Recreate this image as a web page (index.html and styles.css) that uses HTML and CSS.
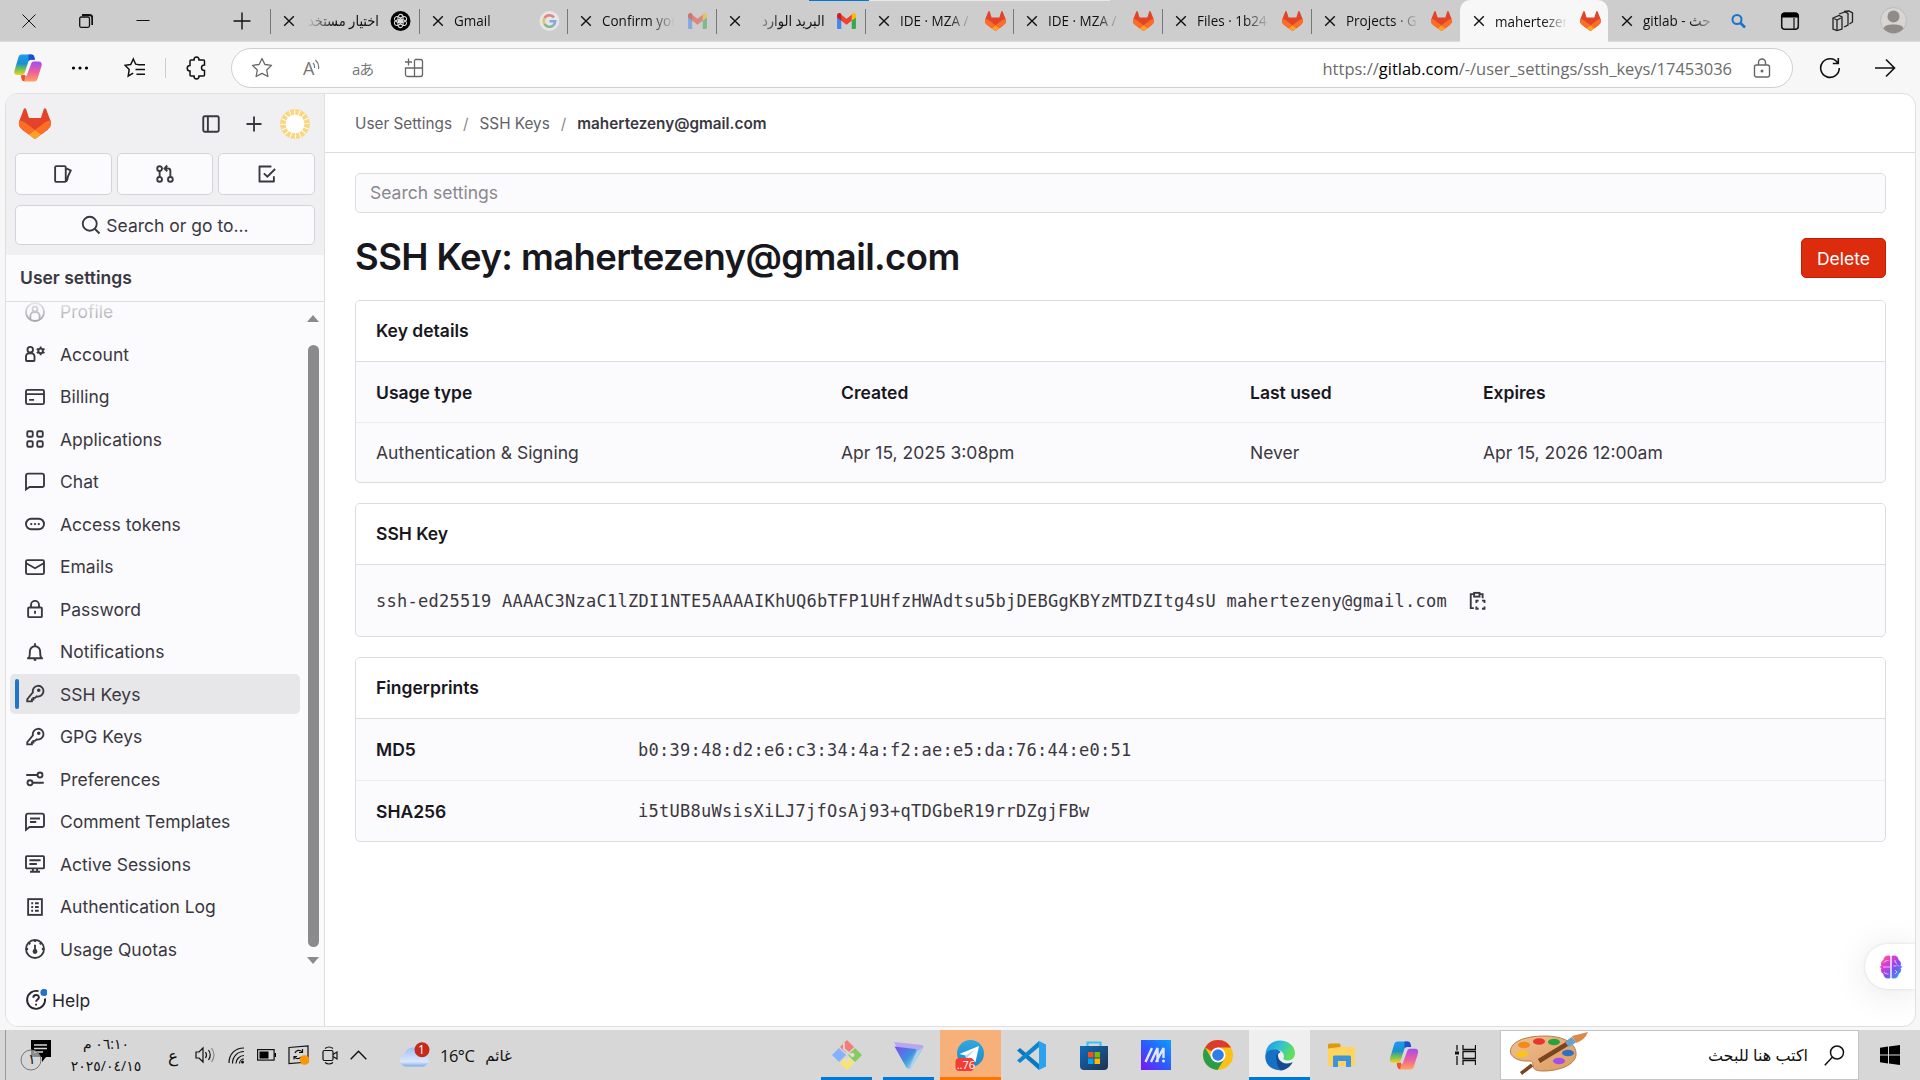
FILE: index.html
```html
<!DOCTYPE html>
<html lang="en">
<head>
<meta charset="utf-8">
<title>SSH Key: mahertezeny@gmail.com</title>
<link rel="stylesheet" href="styles.css">
</head>
<body>
<svg class="defs" width="0" height="0">
  <defs>
    <linearGradient id="cpA" x1="0" y1="0" x2="0" y2="1"><stop offset="0" stop-color="#1a9bf0"/><stop offset=".45" stop-color="#1c8fd0"/><stop offset=".7" stop-color="#6cbf5a"/><stop offset="1" stop-color="#f5d21c"/></linearGradient>
    <linearGradient id="cpB" x1="0" y1="0" x2="0" y2="1"><stop offset="0" stop-color="#a44df0"/><stop offset=".55" stop-color="#f0619a"/><stop offset="1" stop-color="#ffa45c"/></linearGradient>
    <linearGradient id="vpn" x1="0" y1="0" x2="1" y2="1"><stop offset="0" stop-color="#7a4cf5"/><stop offset=".55" stop-color="#3f8fe0"/><stop offset="1" stop-color="#7af5e0"/></linearGradient>
    <linearGradient id="ma" x1="0" y1="1" x2="1" y2="0"><stop offset="0" stop-color="#7a14f5"/><stop offset=".5" stop-color="#2b5cff"/><stop offset="1" stop-color="#0aa0ff"/></linearGradient>
    <linearGradient id="store" x1="0" y1="0" x2="1" y2="1"><stop offset="0" stop-color="#0f6cbd"/><stop offset="1" stop-color="#20314f"/></linearGradient>
    <linearGradient id="edgeA" x1="0" y1="0" x2="1" y2=".4"><stop offset="0" stop-color="#1b8fe0"/><stop offset=".5" stop-color="#2fc0d8"/><stop offset="1" stop-color="#62e05a"/></linearGradient>
    <linearGradient id="tg" x1="0" y1="0" x2="0" y2="1"><stop offset="0" stop-color="#2fa8e0"/><stop offset="1" stop-color="#1c8bc8"/></linearGradient>
    <linearGradient id="brain" x1="0" y1="0" x2="1" y2="1"><stop offset="0" stop-color="#ff8a2a"/><stop offset=".3" stop-color="#e83ad0"/><stop offset=".6" stop-color="#7a50f5"/><stop offset="1" stop-color="#22b5ff"/></linearGradient>
    <linearGradient id="cloud" x1="0" y1="0" x2="0" y2="1"><stop offset="0" stop-color="#9ec0f5"/><stop offset=".75" stop-color="#dce9fb"/><stop offset="1" stop-color="#7fa8ee"/></linearGradient>
    <linearGradient id="wood" x1="0" y1="0" x2="1" y2="1"><stop offset="0" stop-color="#efc193"/><stop offset="1" stop-color="#dc9a60"/></linearGradient>
  </defs>
  <symbol id="tanuki" viewBox="0 0 25 24">
    <path fill="#E24329" d="m24.507 9.5-.034-.09L21.082.562a.896.896 0 0 0-1.694.091l-2.29 7.01H7.825L5.535.653a.898.898 0 0 0-1.694-.09L.451 9.411.416 9.5a6.297 6.297 0 0 0 2.09 7.278l.012.01.03.022 5.16 3.867 2.56 1.935 1.554 1.176a1.051 1.051 0 0 0 1.268 0l1.555-1.176 2.56-1.935 5.197-3.89.014-.01A6.297 6.297 0 0 0 24.507 9.5Z"/>
    <path fill="#FC6D26" d="m24.507 9.5-.034-.09a11.44 11.44 0 0 0-4.56 2.051l-7.447 5.632 4.742 3.584 5.197-3.89.014-.01A6.297 6.297 0 0 0 24.507 9.5Z"/>
    <path fill="#FCA326" d="m7.707 20.677 2.56 1.935 1.555 1.176a1.051 1.051 0 0 0 1.268 0l1.555-1.176 2.56-1.935-4.743-3.584-4.755 3.584Z"/>
    <path fill="#FC6D26" d="M5.01 11.461a11.43 11.43 0 0 0-4.56-2.05L.416 9.5a6.297 6.297 0 0 0 2.09 7.278l.012.01.03.022 5.16 3.867 4.745-3.584-7.444-5.632Z"/>
  </symbol>
  <symbol id="x" viewBox="0 0 12 12"><path d="M1.2 1.2l9.6 9.6M10.8 1.2L1.2 10.8" fill="none" stroke="#111" stroke-width="1.4"/></symbol>
  <symbol id="gmail" viewBox="0 0 20 16">
    <path fill="#4285f4" d="M1 3.5v11A1.2 1.2 0 0 0 2.2 15.7H5V7z"/><path fill="#34a853" d="M15 7v8.700h2.800A1.200 1.200 0 0 0 19 14.500V3.500z"/>
    <path fill="#ea4335" d="M4.500 1.600L10 5.800l5.500-4.200v5.800L10 11.500 4.500 7.400z"/><path fill="#c5221f" d="M1 2.500C1 .6 3.200-.2 4.500.8L5 1.200v6.500L1 4.700z"/><path fill="#fbbc04" d="M19 2.500C19 .6 16.800-.2 15.500.8l-.5.4v6.500l4-3z"/>
  </symbol>
  <symbol id="copilot" viewBox="0 0 28 30">
    <path fill="url(#cpA)" d="M8 1.500h9.500c1.500 0 2.300.8 2.700 2.200l.8 3h-4c-1.500 0-2.300.7-2.700 2L11 19c-.5 1.800-1.500 3-3.500 3H3.200C.8 22-.2 20 .5 17.500L4.500 4c.6-1.700 1.500-2.500 3.500-2.500z"/>
    <path fill="url(#cpB)" d="M20 8.500h4.800c2.400 0 3.400 2 2.700 4.500L23.500 26c-.6 1.700-1.500 2.500-3.500 2.500h-9.500c-1.500 0-2.300-.8-2.700-2.200L7 23.500h3.500c1.500 0 2.300-.7 2.700-2L17 11c.5-1.700 1.300-2.500 3-2.500z"/>
    <path fill="#1d4fd0" d="M14.500 1.500h3c1.500 0 2.300.8 2.700 2.200l.8 3h-4c-1.200 0-2 .6-2.500 1.500z"/>
    <path fill="#f0522c" d="M7.500 22h3.800l-1 6.300c-1.300 0-2.100-.8-2.500-2.200L7 23z"/>
  </symbol>
  <symbol id="i-key" viewBox="0 0 16 16"><path d="M6.300 6.700a4.300 4.300 0 1 1 3.100 3.200L8 11.100H6.700v1.300H5.500v1.500H1.800v-1.700z"/><circle cx="11" cy="5" r=".7" fill="currentColor"/></symbol>
</svg>

<header class="tabbar">
  <div class="loadline"><i></i></div>
  <div class="win">
    <span><svg width="14" height="14" viewBox="0 0 14 14"><path d="M.5.5l13 13M13.500.5l-13 13" stroke="#111" fill="none"/></svg></span>
    <span><svg width="14" height="14" viewBox="0 0 14 14" fill="none" stroke="#111" stroke-width="1.300"><rect x=".7" y="3" width="9.800" height="10.300" rx="1.500"/><path d="M3 1h7.500a2.800 2.800 0 0 1 2.800 2.800V11" stroke-width="2"/></svg></span>
    <span><svg width="14" height="14" viewBox="0 0 14 14"><path d="M.5 6.500h13" stroke="#111"/></svg></span>
  </div>
  <span class="newtab"><svg width="18" height="18" viewBox="0 0 18 18"><path d="M.5 9h17M9 .5v17" stroke="#111" stroke-width="1.400"/></svg></span>
  <div class="tabs">
    <div class="tab"><svg class="tx"><use href="#x"/></svg><span class="tt ar"><b>اختيار مستخدم</b></span>
      <svg class="fav" viewBox="0 0 20 20"><circle cx="10" cy="10" r="10"/><g fill="none" stroke="#ddd" stroke-width="1.100"><ellipse cx="10" cy="7" rx="2.600" ry="3.600"/><ellipse cx="10" cy="7" rx="2.600" ry="3.600" transform="rotate(60 10 10)"/><ellipse cx="10" cy="7" rx="2.600" ry="3.600" transform="rotate(120 10 10)"/><ellipse cx="10" cy="7" rx="2.600" ry="3.600" transform="rotate(180 10 10)"/><ellipse cx="10" cy="7" rx="2.600" ry="3.600" transform="rotate(240 10 10)"/><ellipse cx="10" cy="7" rx="2.600" ry="3.600" transform="rotate(300 10 10)"/></g></svg></div>
    <div class="tab"><svg class="tx"><use href="#x"/></svg><span class="tt"><b>Gmail</b></span>
      <svg class="fav dim" viewBox="0 0 20 20"><circle cx="10" cy="10" r="10" fill="#fff"/><g fill="none" stroke-width="2.600"><path d="M14.500 6.300A5.800 5.800 0 0 0 5 7.100" stroke="#ea4335"/><path d="M5 7.100a5.800 5.800 0 0 0 0 5.800" stroke="#fbbc04"/><path d="M5 12.900a5.800 5.800 0 0 0 8.700 1.500" stroke="#34a853"/><path d="M13.700 14.400a5.600 5.600 0 0 0 2-4.200H10" stroke="#4285f4"/></g></svg></div>
    <div class="tab"><svg class="tx"><use href="#x"/></svg><span class="tt"><b>Confirm you</b></span><svg class="fav dim"><use href="#gmail"/></svg></div>
    <div class="tab"><svg class="tx"><use href="#x"/></svg><span class="tt ar"><b>البريد الوارد</b></span><svg class="fav"><use href="#gmail"/></svg></div>
    <div class="tab"><svg class="tx"><use href="#x"/></svg><span class="tt"><b>IDE · MZA / m</b></span><svg class="fav"><use href="#tanuki"/></svg></div>
    <div class="tab"><svg class="tx"><use href="#x"/></svg><span class="tt"><b>IDE · MZA / m</b></span><svg class="fav"><use href="#tanuki"/></svg></div>
    <div class="tab"><svg class="tx"><use href="#x"/></svg><span class="tt"><b>Files · 1b24</b></span><svg class="fav"><use href="#tanuki"/></svg></div>
    <div class="tab"><svg class="tx"><use href="#x"/></svg><span class="tt"><b>Projects · Gi</b></span><svg class="fav"><use href="#tanuki"/></svg></div>
    <div class="tab active"><svg class="tx"><use href="#x"/></svg><span class="tt"><b>mahertezeny</b></span><svg class="fav"><use href="#tanuki"/></svg></div>
    <div class="tab plain"><svg class="tx"><use href="#x"/></svg><span class="tt"><b>gitlab - حث</b></span>
      <svg class="fav" viewBox="0 0 20 20" fill="none" stroke="#1a73c8" stroke-width="2"><circle cx="8.500" cy="8.500" r="4.500"/><path d="M12 12l4.500 4.500" stroke-width="2.600"/></svg></div>
  </div>
  <div class="tabtools">
    <svg width="20" height="20" viewBox="0 0 20 20"><rect x="1.700" y="2.200" width="16.600" height="16" rx="3" fill="none" stroke="#111" stroke-width="1.500"/><path d="M1.500 6.500V4.500a3 3 0 0 1 3-3h11a3 3 0 0 1 3 3v2z"/><path d="M14 7v11" stroke="#111" stroke-width="1.200"/></svg>
    <svg width="24" height="22" viewBox="0 0 24 22" fill="none" stroke="#222" stroke-width="1.300"><path d="M2 8l6-2.500 3 1.500v12l-5 1.500-4-1.500zM6 10l4-2M6 10v10M2 8l4 2"/><path d="M8 4l6-2 3 1.500V15l-4 2M13 1.500l5-.5 3.500 2V12l-3 2"/></svg>
    <svg width="27" height="27" viewBox="0 0 27 27"><circle cx="13.500" cy="13.500" r="13" fill="#d8d5d2" stroke="#bdbab7"/><circle cx="13.500" cy="9.500" r="6" fill="#8f8b88"/><path d="M3.500 21.500c1-3 4-4 10-4s9 1 10 4a13 13 0 0 1-20 0z" fill="#8f8b88"/></svg>
  </div>
</header>

<div class="toolbar">
  <div class="tools">
    <svg width="28" height="30"><use href="#copilot"/></svg>
    <svg width="18" height="6" viewBox="0 0 18 6"><circle cx="2.500" cy="3" r="1.600"/><circle cx="9" cy="3" r="1.600"/><circle cx="15.500" cy="3" r="1.600"/></svg>
    <svg width="22" height="22" viewBox="0 0 22 22" fill="none" stroke="#111" stroke-width="1.500"><path d="M14 7.600l-2.300-.4L9.300 2 6.700 7.500l-5.700.8 4.200 4.100L4.200 19l5-2.800"/><path d="M14 7.700h7M11.500 12.500H21M12.500 17.300H21" stroke-width="1.600"/></svg>
    <i class="sep"></i>
    <svg width="22" height="24" viewBox="0 0 22 24" fill="none" stroke="#111" stroke-width="1.500"><path d="M5 4h3c0-4 5-4 5 0h4.500a1 1 0 0 1 1 1v4c-4 0-4 5.500 0 5.500V19a1 1 0 0 1-1 1H13c0 4-5 4-5 0H5a1 1 0 0 1-1-1v-4c-3.700 0-3.700-5.500 0-5.500V5a1 1 0 0 1 1-1z"/></svg>
  </div>
  <div class="address">
    <svg width="22" height="22" viewBox="0 0 22 22" fill="none" stroke="#666" stroke-width="1.300"><path d="M11 1.500l2.900 6 6.600.9-4.800 4.600 1.200 6.500L11 16.400l-5.900 3.100L6.300 13 1.500 8.400l6.600-.9z" stroke-linejoin="round"/></svg>
    <span class="aloud">A<svg width="8" height="11" viewBox="0 0 8 11" fill="none" stroke="#777" stroke-width="1.200"><path d="M1 4q2 2 1.500 5M3.500 1q4 4 3 9"/></svg></span>
    <span class="trans">aあ</span>
    <svg width="20" height="20" viewBox="0 0 20 20" fill="none" stroke="#666" stroke-width="1.300"><path d="M11 1.500h5.500a2 2 0 0 1 2 2v13a2 2 0 0 1-2 2h-13a2 2 0 0 1-2-2V10h17M10.500 1.500v17M4.500.5v7M1 4h7"/></svg>
    <div class="url">https://<em>gitlab.com</em>/-/user_settings/ssh_keys/17453036</div>
    <svg width="18" height="20" viewBox="0 0 18 20" fill="none" stroke="#666" stroke-width="1.400"><rect x="1.500" y="7" width="15" height="12" rx="2"/><path d="M5.500 7V4.500a3.500 3.500 0 0 1 7 0V7"/><circle cx="9" cy="13" r=".8" fill="#666"/></svg>
  </div>
  <div class="nav2">
    <svg width="22" height="22" viewBox="0 0 22 22" fill="none" stroke="#111" stroke-width="1.600"><path d="M18.800 6A9.300 9.300 0 1 0 20.300 11M19.300 1v5.500h-5.500"/></svg>
    <svg width="22" height="20" viewBox="0 0 22 20" fill="none" stroke="#111" stroke-width="1.600"><path d="M1 10h19M12 1.500l8.500 8.500-8.500 8.500"/></svg>
  </div>
</div>

<div class="page">
  <aside class="side">
    <div class="sidetop">
      <div class="brand">
        <svg width="32" height="31"><use href="#tanuki"/></svg>
        <svg class="ic push" viewBox="0 0 16 16"><rect x="1.800" y="1.800" width="12.400" height="12.400" rx="1.200"/><path d="M5.500 2v12"/></svg>
        <svg class="ic" viewBox="0 0 16 16"><path d="M8 2v12M2 8h12"/></svg>
        <svg class="ava" width="30" height="30" viewBox="0 0 30 30"><circle cx="15" cy="15" r="14.500" fill="#fff" stroke="#f2e2c0"/><circle cx="15" cy="15" r="12" fill="none" stroke="#f9d77e" stroke-width="5.500" stroke-dasharray="3.700 1"/><rect x="7.500" y="7.500" width="15" height="15" rx="2" fill="#fff"/></svg>
      </div>
      <div class="trio">
        <span><svg class="ic" viewBox="0 0 16 16"><rect x="1.700" y="1.700" width="8.500" height="12.600" rx="1"/><path d="M10.500 3.500l3.700 1.700-3.700 8"/><path d="M10.200 13.800c1 0 1.500-2 1.500-3"/></svg></span>
        <span><svg class="ic" viewBox="0 0 16 16"><circle cx="3.700" cy="3.700" r="1.900"/><circle cx="3.700" cy="12.300" r="1.900"/><circle cx="12.300" cy="12.300" r="1.900"/><path d="M3.700 5.600v4.800M12.300 10.400V5.500a2 2 0 0 0-2-2H8M9.800 1.200L7.600 3.500l2.200 2.300"/></svg></span>
        <span><svg class="ic" viewBox="0 0 16 16"><path d="M13.500 9.800V14H2V2h9.500" stroke-linejoin="round"/><path d="M5.500 7.500L8.300 10.200 14.500 4"/></svg></span>
      </div>
      <div class="sgo"><svg class="ic" viewBox="0 0 16 16"><circle cx="7" cy="7" r="5.600"/><path d="M11 11l3.800 3.800"/></svg>Search or go to...</div>
    </div>
    <h2>User settings</h2>
    <div class="navwrap">
      <nav>
        <a><svg class="ic" viewBox="0 0 16 16"><circle cx="8" cy="8" r="7.200"/><circle cx="8" cy="5.600" r="2"/><path d="M4.300 13.500V11a3 3 0 0 1 3-3h1.400a3 3 0 0 1 3 3v2.500"/></svg>Profile</a>
        <a><svg class="ic" viewBox="0 0 16 16"><circle cx="4.200" cy="4.500" r="2.200"/><path d="M.8 13V10a2.600 2.600 0 0 1 2.600-2.600H5A2.600 2.600 0 0 1 7.600 10v3q0 .6-.6.600H1.400q-.6 0-.6-.6z"/><circle cx="12.500" cy="5.500" r="1.800"/><path d="M12.500 2v1.400M12.500 7.600V9M9.400 3.800l1.300.7M14.300 6.500l1.300.7M9.400 7.200l1.300-.7M14.300 4.500l1.300-.7"/></svg>Account</a>
        <a><svg class="ic" viewBox="0 0 16 16"><rect x=".8" y="2.300" width="14.400" height="11.400" rx="1.200"/><path d="M1 5.700h14M3.300 10.300h4"/></svg>Billing</a>
        <a><svg class="ic" viewBox="0 0 16 16"><rect x="1.800" y="1.800" width="4.400" height="4.400" rx="1"/><rect x="9.800" y="1.800" width="4.400" height="4.400" rx="1"/><rect x="1.800" y="9.800" width="4.400" height="4.400" rx="1"/><rect x="9.800" y="9.800" width="4.400" height="4.400" rx="1"/></svg>Applications</a>
        <a><svg class="ic" viewBox="0 0 16 16"><path d="M.8 14V3q0-1.700 1.700-1.700h11q1.700 0 1.700 1.700v7.300q0 1.700-1.700 1.700H3.600z"/></svg>Chat</a>
        <a><svg class="ic" viewBox="0 0 16 16"><rect x=".8" y="3.800" width="14.400" height="8.400" rx="4.200"/><g class="dot"><circle cx="5" cy="8" r=".9"/><circle cx="8" cy="8" r=".9"/><circle cx="11" cy="8" r=".9"/></g></svg>Access tokens</a>
        <a><svg class="ic" viewBox="0 0 16 16"><rect x=".8" y="2.500" width="14.400" height="11.200" rx="1.200"/><path d="M1 5l7 4 7-4"/></svg>Emails</a>
        <a><svg class="ic" viewBox="0 0 16 16"><rect x="2.500" y="6.800" width="11" height="7.700" rx=".8"/><path d="M4.800 6.500V4.700a3.200 3.200 0 0 1 6.400 0v1.800M8 9.300v2.500"/></svg>Password</a>
        <a><svg class="ic" viewBox="0 0 16 16"><path d="M1.700 13h12.600M3 13c1-1.500.9-3 .9-5.500a4.100 4.100 0 0 1 8.200 0c0 2.500 0 4 .9 5.500M8 1v2"/><path d="M7 14.300h2"/></svg>Notifications</a>
        <a class="on"><svg class="ic"><use href="#i-key"/></svg>SSH Keys</a>
        <a><svg class="ic"><use href="#i-key"/></svg>GPG Keys</a>
        <a><svg class="ic" viewBox="0 0 16 16"><circle cx="12" cy="4.800" r="2"/><circle cx="4" cy="11" r="2"/><path d="M1 4.800h9M6 11h9"/></svg>Preferences</a>
        <a><svg class="ic" viewBox="0 0 16 16"><path d="M.8 14.300V3q0-1.700 1.700-1.700h11q1.700 0 1.700 1.700v7.300q0 1.700-1.700 1.700H3.600zM4 5.200h8M4 8h5"/></svg>Comment Templates</a>
        <a><svg class="ic" viewBox="0 0 16 16"><rect x=".8" y="1.700" width="14.400" height="9.800" rx=".6"/><path d="M3.500 5h9M3.500 8h6M4 14.200h8M6.300 12v2M9.700 12v2"/></svg>Active Sessions</a>
        <a><svg class="ic" viewBox="0 0 16 16"><rect x="2.500" y="1.700" width="11" height="12.600"/><path d="M5 5h1.500M8 5h3M5 8h1.500M8 8h3M5 11h1.500M8 11h3"/></svg>Authentication Log</a>
        <a><svg class="ic" viewBox="0 0 16 16"><circle cx="8" cy="8" r="7.200"/><path d="M8 4.500v6M8 1v1.300M1 8h1.500M13.500 8H15M3.200 3.200l1 1M12.800 3.200l-1 1"/><circle cx="8" cy="10" r="1.200" fill="currentColor"/></svg>Usage Quotas</a>
      </nav>
      <div class="sb"><i class="up"></i><i class="thumb"></i><i class="down"></i></div>
    </div>
    <div class="help"><svg width="22" height="22" viewBox="0 0 22 22" fill="none" stroke="#28272d" stroke-width="1.900"><path d="M13.500 2.200A9 9 0 1 0 20 9.500"/><path d="M8.300 8.700c0-3.700 5.600-3.500 5.600-.3 0 2-2.800 2-2.800 4.300M11.100 14.800v1.800"/><circle cx="19" cy="3.500" r="3.600" fill="#1f75cb" stroke="none"/></svg>Help</div>
  </aside>
  <main>
    <div class="crumbs"><span>User Settings</span><i>/</i><span>SSH Keys</span><i>/</i><b>mahertezeny@gmail.com</b></div>
    <div class="content">
      <div class="ssearch">Search settings</div>
      <div class="head"><h1>SSH Key: mahertezeny@gmail.com</h1><button class="del">Delete</button></div>
      <section class="card">
        <h3>Key details</h3>
        <div class="row g4 th"><span>Usage type</span><span>Created</span><span>Last used</span><span>Expires</span></div>
        <div class="row g4"><span>Authentication &amp; Signing</span><span>Apr 15, 2025 3:08pm</span><span>Never</span><span>Apr 15, 2026 12:00am</span></div>
      </section>
      <section class="card">
        <h3>SSH Key</h3>
        <div class="row keyrow"><code>ssh-ed25519 AAAAC3NzaC1lZDI1NTE5AAAAIKhUQ6bTFP1UHfzHWAdtsu5bjDEBGgKBYzMTDZItg4sU mahertezeny@gmail.com</code>
          <svg class="ic" viewBox="0 0 16 16"><path d="M5.500 2.500H3v11.200h2.500M10 2.500h2.500v3.200"/><rect x="5.700" y="1.500" width="4.300" height="3"/><path d="M7.500 9.500V7.700h1.800M12 7.700h2v1.800M14 12.300V14.200h-2M9.300 14.200H7.500v-1.900"/></svg></div>
      </section>
      <section class="card">
        <h3>Fingerprints</h3>
        <div class="row g2"><strong>MD5</strong><code>b0:39:48:d2:e6:c3:34:4a:f2:ae:e5:da:76:44:e0:51</code></div>
        <div class="row g2"><strong>SHA256</strong><code>i5tUB8uWsisXiLJ7jfOsAj93+qTDGbeR19rrDZgjFBw</code></div>
      </section>
    </div>
    <div class="float"><svg width="24" height="26" viewBox="0 0 24 26"><path fill="url(#brain)" d="M11.300 2v22C8 25.500 4.500 23.500 4.300 20 1.800 18.500 1.300 15.500 2.500 14L.3 13l2.200-1.200C1.300 9.500 2.500 7 4.300 6 4.500 2.500 8 .5 11.300 2zM12.700 2v22c3.300 1.500 6.800-.5 7-4 2.500-1.500 3-4.500 1.800-6l2.200-1-2.200-1.200c1.200-2.300 0-4.800-1.800-5.800-.2-3.500-3.700-5.500-7-4z"/><path d="M4 13h7M5 8.500c1-2 3-2 4.500-2M5 18c1 2 3 2 4.500 2M16 6v2l2 1.500M14.500 12h3M18 10.500l2 2M16 16l2 2-2 2" stroke="#fff" stroke-opacity=".65" fill="none"/></svg></div>
  </main>
</div>

<footer class="task">
  <div class="tray">
    <span class="note"><svg width="32" height="32" viewBox="0 0 32 32"><path d="M11 1h20v17h-5l-4 5v-5H11z"/><path d="M14 6h13M14 9.500h13M14 13h9" stroke="#d6d6d6" stroke-width="1.300"/><circle cx="11" cy="21" r="10" fill="#d6d6d6" fill-opacity=".65" stroke="#777"/></svg><b>١</b></span>
    <span class="clock"><b>٠٦:١٠ م</b><b>٢٠٢٥/٠٤/١٥</b></span>
    <span class="lang">ع</span>
    <svg width="21" height="18" viewBox="0 0 21 18" fill="none" stroke="#111" stroke-width="1.200"><path d="M1 6h3l4-4v14l-4-4H1zM10.500 6q2 3 0 6M13.500 4q3.500 5 0 10"/><path d="M16.500 2q5 7 0 14" stroke="#888"/></svg>
    <svg width="17" height="17" viewBox="0 0 17 17" fill="none" stroke="#111" stroke-width="1.200"><path d="M1 16C1 7 7 1 16 1M4.500 16.500C4.500 9.500 9.500 4.500 16 4.500M8 16.500c0-4 3.500-8 8-8M11.500 16.500c0-2.500 2-4.500 4.500-4.500"/><circle cx="14.500" cy="15" r="1.500" fill="#111" stroke="none"/></svg>
    <svg width="19" height="12" viewBox="0 0 19 12"><rect x=".6" y=".6" width="16.500" height="10.500" fill="none" stroke="#111" stroke-width="1.200"/><path d="M2.500 2.500h9v7h-9zM17.500 4h1.500v4h-1.500z"/></svg>
    <svg width="22" height="20" viewBox="0 0 22 20" fill="none" stroke="#111" stroke-width="1.200"><path d="M1 2.500L20 1v16L1 18.500z"/><path d="M7 8c1-3 5-3.500 7-1M14.500 4v3.500H11M13 12c-2 2.500-5 2-6.500 0M6 14.500V11.500h3"/><circle cx="16.500" cy="15" r="4.800" fill="#ff9500" stroke="none"/></svg>
    <svg width="16" height="19" viewBox="0 0 16 19" fill="none" stroke="#111" stroke-width="1.200"><path d="M3 2.500q4-3 8 0M3 16.500q4 3 8 0"/><rect x="1" y="4.500" width="10" height="10" rx="1.500"/><path d="M11 8.500l4-2.500v7l-4-2.500"/></svg>
    <svg width="17" height="10" viewBox="0 0 17 10" fill="none" stroke="#111" stroke-width="1.400"><path d="M.7 9.300L8.500 1.200l7.800 8.100"/></svg>
    <span class="wx"><svg width="31" height="26" viewBox="0 0 31 26"><path fill="url(#cloud)" d="M7 24.500a6.500 6.500 0 0 1-1.500-12.800A9.500 9.500 0 0 1 23 11a6.800 6.800 0 0 1 1 13.500z"/><circle cx="23" cy="7.700" r="7.500" fill="#c42b1c"/></svg><i>1</i></span>
    <span class="temp">16°C</span><span class="cond">غائم</span>
  </div>
  <div class="apps">
    <span class="app run"><svg width="30" height="32" viewBox="0 0 30 32"><path fill="#f47c7c" d="M15 1l7 7-7 7-7-7z"/><path fill="#84b2ff" d="M7 9l7 7-7 7-7-7z"/><path fill="#87cb5c" d="M23 9l7 7-7 7-7-7z"/><path fill="#fbe373" d="M15 17l7 7-7 7-7-7z"/><path d="M12 4v6l7 6M15 12v9" stroke="#d9d4d0" stroke-width="2" fill="none"/><circle cx="15" cy="21.500" r="2" fill="#e5dfc8"/><circle cx="20.500" cy="16" r="2" fill="#e0e6d6"/></svg></span>
    <span class="app run"><svg width="31" height="31" viewBox="0 0 31 31"><path fill="#b9a6f0" d="M1 2l28 3q2 .5 1 3L18 28q-1.500 2.500-3 0z"/><path fill="#8ee8e0" d="M29.500 7.500L18 28q-1 1.500-2 1l8-17z"/><path fill="url(#vpn)" d="M1.500 6.500L22 9q2 .5 1 2.500L15 28q-1 1-2-1z"/></svg></span>
    <span class="app tg"><svg width="30" height="32" viewBox="0 0 30 32"><circle cx="15.500" cy="14.500" r="13.500" fill="url(#tg)"/><path fill="#fff" d="M4.500 15L24 7l-3.500 16-6-4.500-3 3-1-5z"/><path d="M10.500 16.500L20 10.500l-7 7.500-1.500 3.500z" fill="#bcd8e8"/><rect x=".5" y="19" width="18.500" height="13" rx="4" fill="#f23c34"/></svg><i>..76</i></span>
    <span class="app"><svg width="30" height="31" viewBox="0 0 30 31"><path fill="#0a78be" d="M0 10.500l3-2.500L22 24v6z"/><path fill="#0f85cc" d="M0 20.500L3 23 22 7V1z"/><path fill="#29a3ee" d="M22 1l7 3.500v22L22 30z"/></svg></span>
    <span class="app"><svg width="30" height="31" viewBox="0 0 30 31"><path d="M8.500 8V2.500h13V8" fill="none" stroke="#39c3f0" stroke-width="2.200"/><path fill="url(#store)" d="M1 6h28v20q0 4-4 4H5q-4 0-4-4z"/><path fill="#f25022" d="M9 12h5.500v5.500H9z"/><path fill="#7fba00" d="M15.500 12H21v5.500h-5.500z"/><path fill="#00a4ef" d="M9 18.500h5.500V24H9z"/><path fill="#ffb900" d="M15.500 18.500H21V24h-5.500z"/></svg></span>
    <span class="app"><svg width="30" height="30" viewBox="0 0 30 30"><path fill="url(#ma)" d="M0 0h30v30H0z"/><path d="M4.500 22L11 8M10 22l6.500-14v14M15 22L22.500 8v10" stroke="#e4e8ff" stroke-width="2.400" fill="none"/><circle cx="22.500" cy="21" r="1.500" fill="#e4e8ff"/></svg></span>
    <span class="app"><svg width="30" height="30" viewBox="0 0 30 30"><circle cx="15" cy="15" r="15" fill="#fbc116"/><path fill="#dc3a2d" d="M15 15L2 7.500A15 15 0 0 1 28 7.500H15z"/><path fill="#2a9d4b" d="M2 7.500A15 15 0 0 0 14.500 30L21.500 18.700 15 15 8.600 18.700z"/><circle cx="15" cy="15" r="7.500" fill="#fff"/><circle cx="15" cy="15" r="5.800" fill="#2f7de8"/></svg></span>
    <span class="app cur"><svg width="30" height="31" viewBox="0 0 30 31"><path fill="url(#edgeA)" d="M.5 14C1 6 7 .5 15 .5S30 6 30 13c0 5-3.500 7.500-7.500 7.500-3 0-4.500-1-4-2.500C20 14 17 10 11.500 10 6 10 1.500 12 .5 14z"/><path fill="#1670c4" d="M.3 16C.5 11 6 9 11 9.500c3 .3 4.500 2 4.500 3-5 1-6 11 1 17.800C7.500 31 0 25 .3 16z"/><path fill="#154b94" d="M11 18c0-2 .8-4 2.500-5.500-2 5 2 11 8.500 11 3 0 4.500-1 5.500-1.500 0 1-4 8-11.500 8.500C13 28 11 22.500 11 18z"/></svg></span>
    <span class="app"><svg width="27" height="25" viewBox="0 0 27 25"><path fill="#dc9a0c" d="M0 2q0-1.500 1.500-1.500H11q1.500 0 1.500 1.500v4H0z"/><path fill="#ffd35c" d="M0 5.500L12 4h15v18q0 1-1 1H1q-1 0-1-1z"/><path fill="#3b94dc" d="M5 24V14q0-1.500 1.500-1.500h15q1.500 0 1.500 1.500v10h-5v-6h-8v6z"/></svg></span>
    <span class="app"><svg width="30" height="31"><use href="#copilot"/></svg></span>
    <span class="app"><svg width="21" height="20" viewBox="0 0 21 20" fill="none" stroke="#111" stroke-width="1.300"><path d="M8 0v4.500h12.500V0M8 20v-4.500h12.500V20M8 6.500h12.500v7H8zM2 0v5.500M2 11v9"/><path d="M0 6.500h4v3H0z" fill="#111" stroke="none"/></svg></span>
  </div>
  <div class="tsearch">
    <svg width="80" height="46" viewBox="0 0 80 46"><path fill="url(#wood)" stroke="#b87a44" d="M21 29C8 30 1 24 1.500 19 2 10 15 4 36 4c18 0 32 7 31 19-1 10-17 16-33 16-9 0-10-3-10-6 0-2-1-4-3-4z"/><g><ellipse cx="15" cy="13" rx="6" ry="3.200" fill="#f28a1c"/><ellipse cx="30" cy="9.500" rx="6" ry="3.200" fill="#e8342c"/><ellipse cx="45" cy="10" rx="6" ry="3.200" fill="#27a33c"/><ellipse cx="13" cy="22" rx="6" ry="3.200" fill="#fcc419"/><ellipse cx="59" cy="21" rx="6" ry="3.200" fill="#2a72c8"/><ellipse cx="50" cy="29" rx="6" ry="3.200" fill="#a24df0"/></g><path d="M58 12L30 29" stroke="#7d4420" stroke-width="4.500"/><path d="M23 33L12 41.500" stroke="#7d4420" stroke-width="3.500"/><path d="M65 7.500l-7 5" stroke="#6ba3c8" stroke-width="7"/><path fill="#dd8848" d="M63 4L79 0q-3 8-12 11z"/></svg>
    <span class="ph">اكتب هنا للبحث</span>
    <svg width="21" height="21" viewBox="0 0 21 21" fill="none" stroke="#111" stroke-width="1.500"><circle cx="13" cy="7.500" r="6.500"/><path d="M8.500 12L.8 20.200"/></svg>
  </div>
  <span class="start"><svg width="20" height="20" viewBox="0 0 20 20"><path d="M0 2.700l8-1.100v8H0zM9 1.400L20 0v9.600H9zM0 10.500h8v8l-8-1.200zM9 10.500h11V20L9 18.500z"/></svg></span>
</footer>
</body>
</html>
```

FILE: styles.css
```css
* { box-sizing: border-box; }
body { margin: 0; width: 1920px; height: 1080px; overflow: hidden; display: flex; flex-direction: column; background: #f7f7f7; font-family: Inter, "Noto Sans", sans-serif; font-size: 17.5px; color: #3a383f; }
svg { flex: none; display: block; }
.defs { position: absolute; }
b, i, em { font-weight: inherit; font-style: normal; }

/* tab strip */
.tabbar { position: relative; flex: none; height: 42px; background: #cdcdcd; display: flex; align-items: stretch; font-family: "Open Sans", "Noto Sans", "DejaVu Sans", sans-serif; font-size: 14.5px; color: #111; border-bottom: 1px solid #dcdcdc; }
.loadline { position: absolute; left: 809px; top: 0; width: 301px; height: 1px; background: #e8e8e8; }
.loadline i { display: block; width: 60px; height: 1px; background: #0078d4; }
.win { display: flex; width: 172px; }
.win span { flex: 1; display: flex; align-items: center; justify-content: center; }
.newtab { width: 98px; padding-left: 61px; display: flex; align-items: center; }
.tabs { display: flex; }
.tab { position: relative; width: 148.700px; display: flex; align-items: center; padding-left: 13px; }
.tab::before { content: ""; position: absolute; left: 0; top: 9px; height: 25px; width: 1px; background: #777; }
.tab.active { background: #f7f7f7; border-radius: 10px 10px 0 0; height: 42px; }
.tab.active::before, .tab.plain::before { display: none; }
.tab.plain { border-radius: 0 0 0 10px; }
.tx { width: 12px; height: 12px; }
.tt { width: 74px; margin-left: 10px; overflow: hidden; white-space: nowrap; -webkit-mask-image: linear-gradient(to right, #000 65%, transparent 98%); mask-image: linear-gradient(to right, #000 65%, transparent 98%); }
.tt b { display: inline-block; transform: scaleX(.93); transform-origin: left; }
.tt.ar { direction: rtl; -webkit-mask-image: linear-gradient(to left, #000 60%, transparent 98%); mask-image: linear-gradient(to left, #000 60%, transparent 98%); }
.tt.ar b { transform-origin: right; transform: scaleX(.9); }
.fav { width: 21px; height: 20px; margin-left: 11px; }
.dim { opacity: .5; }
.tabtools { margin-left: 23px; display: flex; align-items: center; gap: 31px; }
.tabtools svg:last-child { margin-left: -6px; }

/* address row */
.toolbar { flex: none; height: 51px; display: flex; align-items: center; padding-top: 1px; }
.tools { display: flex; align-items: center; width: 231px; padding-left: 14px; }
.tools svg:nth-child(2) { margin-left: 29px; }
.tools svg:nth-child(3) { margin-left: 35px; }
.sep { width: 1px; height: 20px; background: #ccc; margin: 0 20px 0 19px; }
.address { width: 1562px; height: 40px; border: 1px solid #cfcfcf; border-radius: 20px; background: #fff; display: flex; align-items: center; padding-left: 19px; color: #6b6b6b; font-family: "Open Sans", "Noto Sans", sans-serif; }
.aloud { display: flex; align-items: center; margin-left: 30px; font-size: 18px; width: 22px; color: #777; }
.aloud svg { margin: -8px 0 0 -2px; }
.trans { margin-left: 27px; width: 24px; font-size: 15px; letter-spacing: -1px; font-family: "Open Sans", "Noto Sans CJK JP", sans-serif; color: #777; }
.address > svg:nth-child(4) { margin-left: 28px; }
.url { margin-left: auto; font-size: 16.500px; white-space: nowrap; }
.url em { color: #000; }
.address > svg:last-child { margin: 0 21px 0 21px; }
.nav2 { display: flex; align-items: center; gap: 33px; margin-left: 26px; }

/* page frame */
.page { flex: none; width: 1911px; height: 934px; margin-left: 5px; border: 1px solid #dfdfdf; border-radius: 13px; overflow: hidden; display: flex; background: #fff; }
.side { width: 319px; border-right: 1px solid #dfdfe2; background: #fbfafd; display: flex; flex-direction: column; color: #3a383f; }
.ic { width: 20px; height: 20px; fill: none; stroke: currentColor; stroke-width: 1.500; color: #3a383f; overflow: visible; }
.dot { fill: currentColor; stroke: none; }
.sidetop { height: 161px; background: #f0eff2; padding: 0 9px; }
.brand { height: 59px; display: flex; align-items: center; gap: 23px; padding: 0 5px 0 4px; }
.push { margin-left: auto; }
.brand .ava { margin-left: -7px; }
.trio { display: flex; gap: 5px; }
.trio span { flex: 1; height: 42px; border: 1px solid #d4d3d8; border-radius: 5px; background: #fbfafd; display: flex; align-items: center; justify-content: center; }
.sgo { margin-top: 10px; height: 40px; border: 1px solid #d4d3d8; border-radius: 5px; background: #fbfafd; display: flex; align-items: center; justify-content: center; gap: 5px; }
.side h2 { margin: 0; height: 47px; line-height: 45px; padding-left: 14px; font-size: 17.5px; font-weight: 600; border-bottom: 1px solid #dcdcde; }
.navwrap { position: relative; height: 672px; display: flex; overflow: hidden; }
.navwrap::before { content: ""; position: absolute; left: 0; top: 0; width: 300px; height: 28px; z-index: 1; background: linear-gradient(rgba(251,250,253,.9), rgba(251,250,253,.55) 70%, rgba(251,250,253,0)); }
nav { width: 298px; padding-left: 4px; margin-top: -10.500px; display: flex; flex-direction: column; gap: 2.500px; }
nav a { flex: none; height: 40px; width: 290px; padding-left: 15px; display: flex; align-items: center; gap: 15px; border-radius: 5px; white-space: nowrap; }
nav a.on { position: relative; background: #e7e6e9; }
nav a.on::before { content: ""; position: absolute; left: 5px; top: 5px; width: 4px; height: 30px; border-radius: 2px; background: #1f75cb; }
.sb { width: 20px; display: flex; flex-direction: column; align-items: center; padding: 13px 0 0 0; margin-left: -1px; }
.up, .down { border: 6.500px solid transparent; border-top: 0; border-bottom: 7px solid #8b8b8b; }
.down { border-bottom: 0; border-top: 7px solid #8b8b8b; margin-top: 10px; }
.thumb { width: 11px; height: 602px; border-radius: 6px; background: #8b8b8b; margin-top: 23px; }
.help { display: flex; align-items: center; gap: 5px; padding-left: 19px; height: 52px; color: #28272d; }

main { position: relative; flex: 1; }
.crumbs { height: 59px; border-bottom: 1px solid #dcdcde; display: flex; align-items: center; gap: 11px; padding-left: 30px; font-size: 15.300px; color: #626168; }
.crumbs b { font-weight: 600; color: #3a383f; }
.crumbs i { color: #89888d; }
.content { padding: 20px 29px 0 30px; }
.ssearch { height: 40px; border: 1px solid #dcdcde; border-radius: 5px; background: #fbfafd; padding-left: 14px; line-height: 38px; color: #89888d; }
.head { display: flex; justify-content: space-between; align-items: center; height: 87px; padding-top: 3px; }
h1 { margin: -3px 0 0; font-size: 36.500px; font-weight: 600; letter-spacing: -.6px; color: #18171d; }
.del { width: 85px; height: 40px; border: 1px solid #c91c00; border-radius: 5px; background: #dd2b0e; color: #fff; font: inherit; padding: 0; }
.card { border: 1px solid #dcdcde; border-radius: 5px; background: #fbfafd; margin-bottom: 20px; overflow: hidden; }
.card h3 { margin: 0; height: 61px; line-height: 60px; background: #fff; border-bottom: 1px solid #dcdcde; padding-left: 20px; font-size: 17.5px; font-weight: 600; color: #18171d; }
.row { height: 60px; align-items: center; padding-left: 20px; display: grid; white-space: nowrap; }
.row + .row { border-top: 1px solid #ececef; }
.g4 { grid-template-columns: 465px 409px 233px 1fr; }
.th { font-weight: 600; color: #18171d; }
.g2 { grid-template-columns: 262px 1fr; height: 61px; }
.g2 strong { font-weight: 600; color: #18171d; }
.keyrow { height: 71px; display: flex; gap: 20px; }
code { font-family: "DejaVu Sans Mono", monospace; font-size: 17px; letter-spacing: .266px; }
.float { position: absolute; right: 0; top: 850px; width: 50px; height: 45px; border-radius: 23px 0 0 23px; background: #fff; box-shadow: 0 4px 36px rgba(0,0,0,.1), 0 0 3px rgba(0,0,0,.12); display: flex; align-items: center; padding-left: 14px; }

/* taskbar */
.task { flex: none; height: 50px; margin-top: 3px; background: #d7d7d7; display: flex; align-items: stretch; font-family: "Open Sans", "DejaVu Sans", sans-serif; color: #111; }
.tray { width: 816px; display: flex; align-items: center; border-left: 1px solid #999; margin-left: 5px; padding-left: 14px; }
.note { position: relative; width: 32px; height: 32px; }
.note b { position: absolute; left: 8px; top: 10px; font-size: 14px; }
.clock { width: 88px; margin-left: 10px; display: flex; flex-direction: column; align-items: center; direction: rtl; font-size: 14px; line-height: 22px; white-space: nowrap; }
.lang { width: 20px; margin-left: 13px; margin-right: 12px; font-size: 17px; text-align: center; }
.tray > svg { margin-right: 12px; }
.wx { position: relative; margin-left: 20px; }
.wx i { position: absolute; left: 19px; top: -1px; font-size: 12px; color: #fff; }
.temp { margin-left: 10px; font-size: 16.500px; letter-spacing: -.5px; }
.cond { margin-left: 11px; font-size: 15px; }
.apps { display: flex; width: 679px; }
.app { position: relative; width: 61px; margin-right: 1px; display: flex; align-items: center; justify-content: center; margin-left: -.1px; flex: none; }
.apps .app:first-child { margin-left: -5px; }
.run::after, .cur::after, .tg::after { content: ""; position: absolute; left: 5px; right: 5px; bottom: 0; height: 3px; background: #0078d7; }
.cur { background: #efefef; }
.cur::after, .tg::after { left: 0; right: 0; }
.tg { background: #f7b07a; }
.tg::after { background: #ff7300; }
.tg i { position: absolute; left: 16px; top: 27px; width: 20px; text-align: center; font-size: 11px; line-height: 15px; color: #fff; }
.tsearch { width: 359px; border: 1px solid #c4c4c4; background: #fff; display: flex; align-items: center; padding: 0 13px 0 8px; }
.ph { margin-left: auto; margin-right: 16px; direction: rtl; font-size: 16px; }
.start { flex: 1; display: flex; align-items: center; justify-content: center; }
```
